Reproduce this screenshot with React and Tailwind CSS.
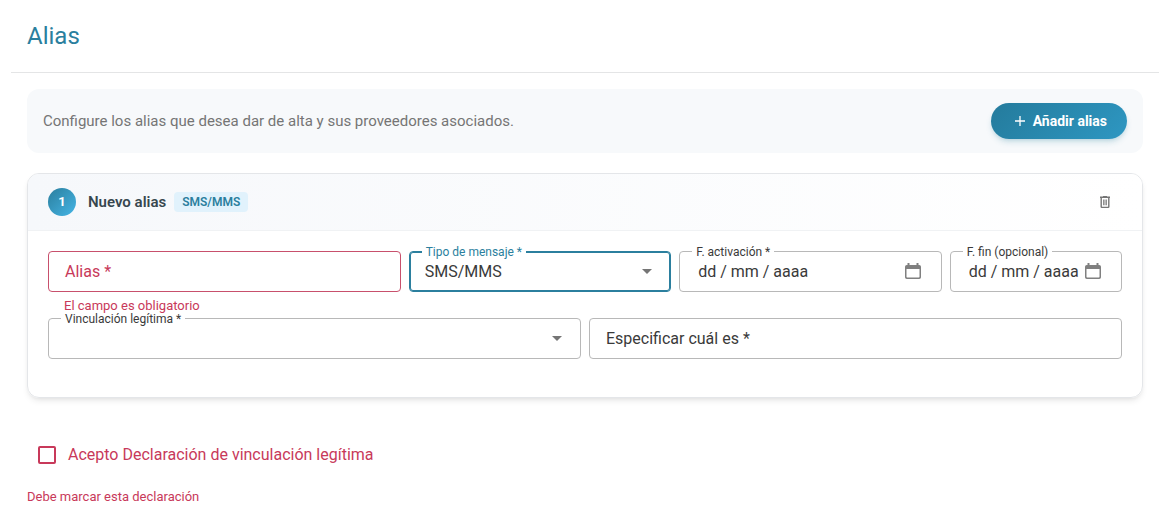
import React, { useState } from "react";

const tones = {
  default: {
    border: "border border-[#b8b8b8]",
    label: "text-[#3a3a3a]",
  },
  active: {
    border: "border border-[#2b7f9e] ring-1 ring-inset ring-[#2b7f9e]",
    label: "text-[#2b7f9e]",
  },
  error: {
    border: "border border-[#c8506c]",
    label: "text-[#c8395a]",
  },
};

const CaretIcon = () => (
  <svg
    viewBox="0 0 10 5"
    className="pointer-events-none w-[10px] h-[5px] shrink-0 fill-[#757575]"
  >
    <path d="M0 0h10L5 5z" />
  </svg>
);

const CalendarIcon = () => (
  <svg viewBox="0 0 16 17" className="w-4 h-[17px] fill-[#808080]">
    <path
      fillRule="evenodd"
      d="M2.5 0h2v2h7V0h2v2h.7A1.8 1.8 0 0 1 16 3.8v10.400a1.800 1.800 0 0 1-1.800 1.800H1.800A1.800 1.800 0 0 1 0 14.200V3.800A1.800 1.800 0 0 1 1.800 2h.7zM1.500 6v7.800a.7.7 0 0 0 .7.7h11.600a.7.7 0 0 0 .7-.7V6z"
    />
  </svg>
);

const TrashIcon = () => (
  <svg viewBox="0 0 10 12" className="w-[10px] h-3 fill-[#757575]">
    <path
      fillRule="evenodd"
      d="M3 0h4v.6h3V2h-.5v8.800A1.200 1.200 0 0 1 8.300 12H1.700A1.200 1.200 0 0 1 .5 10.800V2H0V.6h3zM1.900 2v8.700h6.200V2zM3.200 3.500h1.300v5.700H3.200zM5.500 3.500h1.300v5.700H5.500z"
    />
  </svg>
);

const PlusIcon = () => (
  <svg
    viewBox="0 0 10 10"
    className="w-[10px] h-[10px] fill-none stroke-white stroke-[1.3]"
  >
    <path d="M5 0v10M0 5h10" />
  </svg>
);

// Outlined box with its label sitting on the top border
const Field = ({ id, label, tone = "default", className, children }) => (
  <div className={className}>
    <div
      className={`relative flex items-center h-[41px] rounded ${tones[tone].border}`}
    >
      <label
        htmlFor={id}
        className={`absolute left-3 -top-[6px] px-1 bg-white text-xs leading-3 whitespace-nowrap ${tones[tone].label}`}
      >
        {label}
      </label>
      {children}
    </div>
  </div>
);

// Empty text box, the label takes the place of the value
const EmptyField = ({ id, label, tone = "default", error, className }) => {
  const [value, setValue] = useState("");
  return (
    <div className={className}>
      <div
        className={`relative flex items-center h-[41px] rounded ${tones[tone].border}`}
      >
        {value === "" && (
          <label
            htmlFor={id}
            className={`absolute left-4 text-base leading-6 ${tones[tone].label}`}
          >
            {label}
          </label>
        )}
        <input
          id={id}
          type="text"
          value={value}
          onChange={(e) => setValue(e.target.value)}
          className="w-full h-full px-4 bg-transparent outline-none text-base"
        />
      </div>
      {error && (
        <p className="px-4 pt-[5px] text-[13px] leading-[18px] text-[#c8395a]">
          {error}
        </p>
      )}
    </div>
  );
};

const SelectField = ({ id, label, options, tone, className }) => (
  <Field id={id} label={label} tone={tone} className={className}>
    <select
      id={id}
      className="w-full h-full pl-[15px] pr-2 appearance-none bg-transparent outline-none text-base text-[#3a3a3a]"
    >
      {options.map((option) => (
        <option key={option}>{option}</option>
      ))}
    </select>
    <span className="pointer-events-none mr-[18px]">
      <CaretIcon />
    </span>
  </Field>
);

const DateField = ({ id, label, className }) => (
  <Field id={id} label={label} className={className}>
    <input
      id={id}
      type="text"
      placeholder="dd / mm / aaaa"
      className="flex-1 min-w-0 h-full pl-[18px] outline-none text-base text-[#3a3a3a] placeholder:text-[#3a3a3a]"
    />
    <button type="button" aria-label="Abrir calendario" className="mr-5">
      <CalendarIcon />
    </button>
  </Field>
);

const App = () => {
  return (
    <div className="px-[11px] bg-white font-['Roboto',sans-serif]">
      <header className="px-4 py-5 border-b border-[#e4e5e6]">
        <h1 className="text-2xl leading-8 text-[#2b7f9e]">Alias</h1>
      </header>

      <main className="px-4 pt-4">
        <div className="flex items-center justify-between h-16 px-4 rounded-xl bg-[#f7f9fb]">
          <p className="text-[15px] text-[#757575]">
            Configure los alias que desea dar de alta y sus proveedores
            asociados.
          </p>
          <button
            type="button"
            className="flex items-center gap-2 h-9 pl-6 pr-5 rounded-full bg-linear-135 from-[#247b9c] to-[#2e97c2] text-sm font-bold text-white shadow-md shadow-[#247b9c]/20"
          >
            <PlusIcon />
            Añadir alias
          </button>
        </div>

        <section className="mt-5 rounded-xl border border-[#e4e6e9] shadow-md shadow-black/8 overflow-hidden">
          <div className="flex items-center h-[57px] px-5 border-b border-[#f0f2f4] bg-linear-to-r from-[#f6f8fb] to-white">
            <span className="flex items-center justify-center w-7 h-7 rounded-full bg-linear-135 from-[#2b7f9e] to-[#45b5e6] text-[13px] font-bold text-white">
              1
            </span>
            <h2 className="ml-3 text-[15px] font-semibold text-[#37474f]">
              Nuevo alias
            </h2>
            <span className="ml-2 px-2 rounded bg-[#e1f2fc] text-xs leading-5 font-semibold text-[#2b7f9e]">
              SMS/MMS
            </span>
            <button
              type="button"
              aria-label="Eliminar alias"
              className="ml-auto mr-3"
            >
              <TrashIcon />
            </button>
          </div>

          <form className="px-5 pt-5 pb-[38px]">
            <div className="grid grid-cols-12 gap-x-2">
              <EmptyField
                id="alias"
                label="Alias *"
                tone="error"
                error="El campo es obligatorio"
                className="col-span-4"
              />
              <SelectField
                id="tipo"
                label="Tipo de mensaje *"
                tone="active"
                options={["SMS/MMS"]}
                className="col-span-3"
              />
              <DateField
                id="activacion"
                label="F. activación *"
                className="col-span-3"
              />
              <DateField
                id="fin"
                label="F. fin (opcional)"
                className="col-span-2"
              />
            </div>
            <div className="grid grid-cols-12 gap-x-2 mt-[3px]">
              <SelectField
                id="vinculacion"
                label="Vinculación legítima *"
                options={[""]}
                className="col-span-6"
              />
              <EmptyField
                id="especificar"
                label="Especificar cuál es *"
                className="col-span-6"
              />
            </div>
          </form>
        </section>

        <div className="flex items-center gap-3 mt-[45px] pl-[11px]">
          <input
            id="acepto"
            type="checkbox"
            className="w-[18px] h-[18px] appearance-none rounded-xs border-2 border-[#c8395a] checked:bg-[#c8395a]"
          />
          <label htmlFor="acepto" className="text-base text-[#c8395a]">
            Acepto Declaración de vinculación legítima
          </label>
        </div>
        <p className="mt-5 text-[13px] text-[#c8395a]">
          Debe marcar esta declaración
        </p>
      </main>
    </div>
  );
};

export default App;
